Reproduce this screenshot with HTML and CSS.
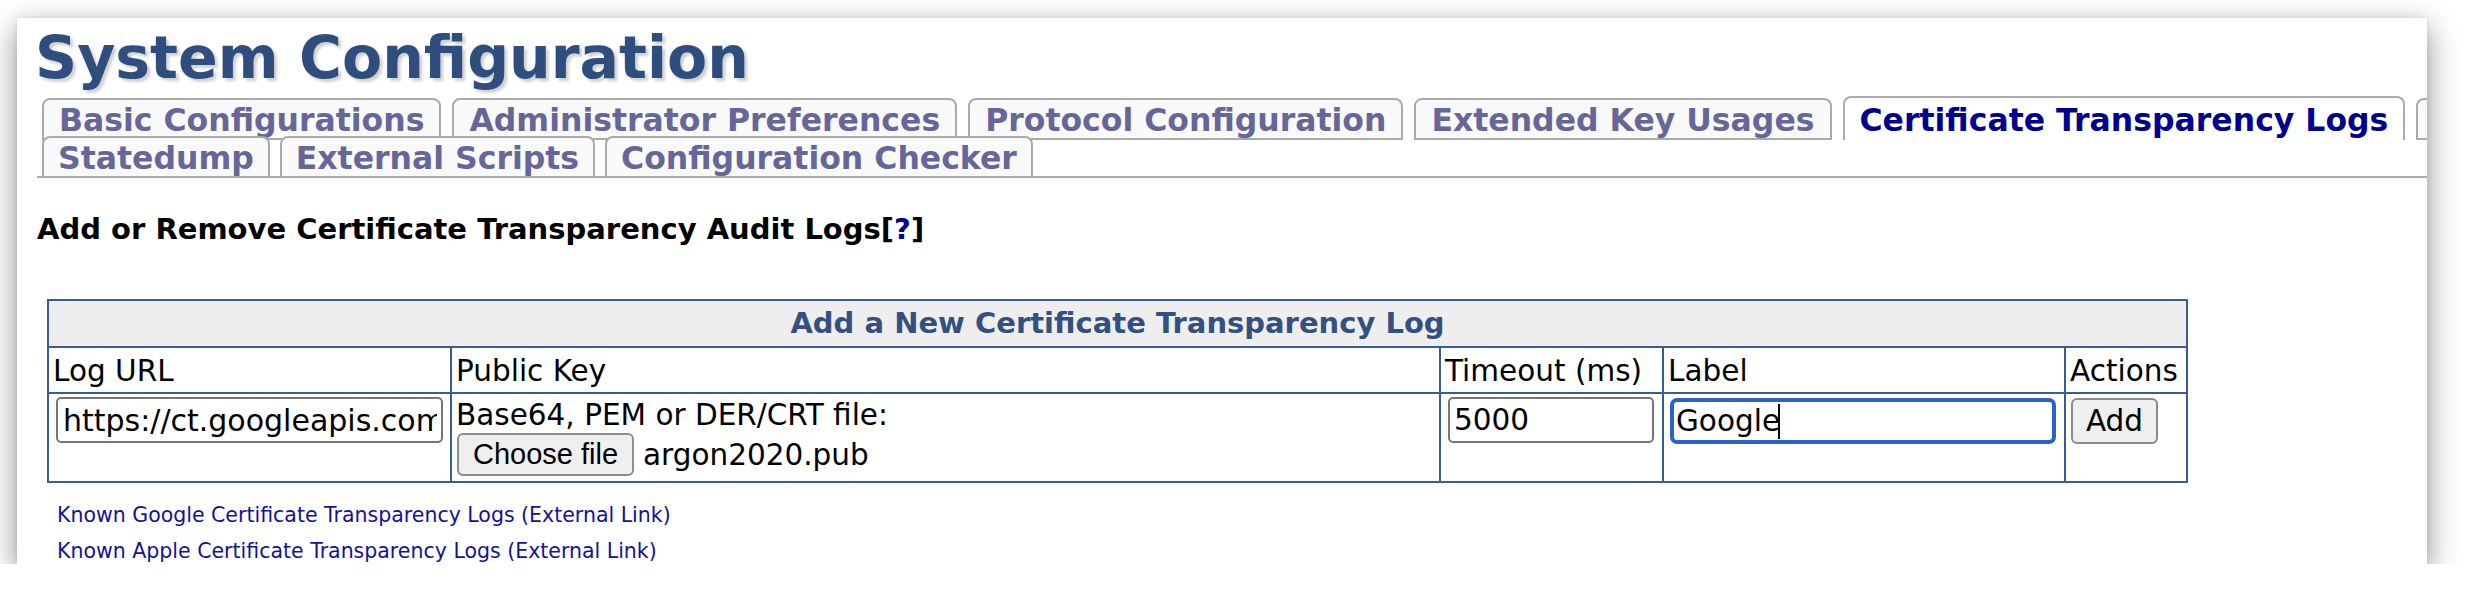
FILE: index.html
```html
<!DOCTYPE html>
<html lang="en">
<head>
<meta charset="utf-8">
<title>System Configuration</title>
<link rel="stylesheet" href="styles.css">
</head>
<body>
<div class="window">
  <h1 class="title">System Configuration</h1>
  <nav class="tabs">
    <div class="tab-row tab-row-1">
      <a class="tab" href="#">Basic Configurations</a>
      <a class="tab" href="#">Administrator Preferences</a>
      <a class="tab" href="#">Protocol Configuration</a>
      <a class="tab" href="#">Extended Key Usages</a>
      <a class="tab tab-active" href="#">Certificate Transparency Logs</a>
      <span class="tab tab-clipped" aria-hidden="true"></span>
    </div>
    <div class="tab-row tab-row-2">
      <a class="tab" href="#">Statedump</a>
      <a class="tab" href="#">External Scripts</a>
      <a class="tab" href="#">Configuration Checker</a>
    </div>
  </nav>

  <h3 class="section-title">Add or Remove Certificate Transparency Audit Logs[<a class="help" href="#">?</a>]</h3>

  <table class="ct-table">
    <colgroup>
      <col class="col-url">
      <col class="col-key">
      <col class="col-timeout">
      <col class="col-label">
      <col class="col-actions">
    </colgroup>
    <thead>
      <tr>
        <th class="caption-cell" colspan="5">Add a New Certificate Transparency Log</th>
      </tr>
      <tr class="head-row">
        <th>Log URL</th>
        <th>Public Key</th>
        <th>Timeout (ms)</th>
        <th>Label</th>
        <th>Actions</th>
      </tr>
    </thead>
    <tbody>
      <tr class="data-row">
        <td><input class="text-input url-input" type="text" value="https://ct.googleapis.com/logs/argon2020/"></td>
        <td>
          <div class="key-hint">Base64, PEM or DER/CRT file:</div>
          <div class="file-row">
            <button class="file-button" type="button">Choose file</button>
            <span class="file-name">argon2020.pub</span>
          </div>
        </td>
        <td><input class="text-input timeout-input" type="text" value="5000"></td>
        <td><div class="text-input label-input">Google<span class="caret"></span></div></td>
        <td><button class="add-button" type="button">Add</button></td>
      </tr>
    </tbody>
  </table>

  <div class="ext-links">
    <a class="ext-link" href="#">Known Google Certificate Transparency Logs (External Link)</a>
    <a class="ext-link" href="#">Known Apple Certificate Transparency Logs (External Link)</a>
  </div>
</div>
</body>
</html>
```

FILE: styles.css
```css
* {
  box-sizing: border-box;
}

body {
  margin: 0;
  background: #ffffff;
  font-family: "DejaVu Sans", Verdana, sans-serif;
  color: #000000;
}

.window {
  margin: 18px 0 0 17px;
  width: 2410px;
  height: 546px;
  padding: 6px 0 0 20px;
  background: #ffffff;
  overflow: hidden;
  box-shadow: 0 10px 30px rgba(0, 0, 0, 0.45), 0 0 6px rgba(0, 0, 0, 0.08);
}

.title {
  margin: 0 0 0 -2px;
  font-size: 58.5px;
  line-height: 68px;
  font-weight: bold;
  color: #2f4e7e;
  text-shadow: 3px 3px 3px #d0d0d0;
  white-space: nowrap;
}

.tabs {
  margin-top: 4px;
}

.tab-row {
  display: flex;
  gap: 11px;
  padding-left: 5px;
  white-space: nowrap;
}

.tab-row-1 {
  align-items: flex-end;
  height: 44px;
}

.tab-row-2 {
  gap: 10px;
  margin-top: -4px;
  border-bottom: 2px solid #aaaaaa;
}

.tab {
  flex: none;
  display: block;
  font-size: 31.5px;
  line-height: 35px;
  font-weight: bold;
  color: #666699;
  background: #f9f9f9;
  border: 2px solid #aaaaaa;
  border-radius: 8px 8px 0 0;
  padding: 3px 15px 0;
  text-decoration: none;
}

.tab-row-2 .tab {
  border-bottom: none;
  padding: 3px 14px 0;
}

.tab-active {
  color: #00008f;
  background: #ffffff;
  border-bottom: none;
  padding-top: 5px;
  padding-bottom: 2px;
}

.tab-clipped {
  width: 200px;
  height: 42px;
}

.section-title {
  margin: 34px 0 0;
  font-size: 29px;
  line-height: 34px;
  font-weight: bold;
  white-space: nowrap;
}

.help {
  color: #000099;
  text-decoration: none;
}

.ct-table {
  margin: 53px 0 0 10px;
  width: 2141px;
  table-layout: fixed;
  border-collapse: separate;
  border-spacing: 0;
  border-top: 2px solid #3b5b95;
  border-left: 2px solid #3b5b95;
}

.col-url { width: 403px; }
.col-key { width: 989px; }
.col-timeout { width: 223px; }
.col-label { width: 402px; }
.col-actions { width: 122px; }

.ct-table th,
.ct-table td {
  border-right: 2px solid #3b5b95;
  border-bottom: 2px solid #3b5b95;
  font-size: 29.5px;
  line-height: 34px;
  font-weight: normal;
  text-align: left;
  vertical-align: top;
  white-space: nowrap;
}

.ct-table .caption-cell {
  padding: 5px 4px 6px;
  background: #eeeeee;
  color: #335080;
  font-size: 29px;
  font-weight: bold;
  text-align: center;
}

.head-row th {
  padding: 6px 4px 4px;
}

.data-row td {
  padding: 3px 4px 5px;
}

.text-input {
  display: block;
  height: 46px;
  margin: 0 0 0 3px;
  padding: 0 4px;
  border: 2px solid #767676;
  border-radius: 5px;
  background: #ffffff;
  color: #000000;
  font-family: "DejaVu Sans", Verdana, sans-serif;
  font-size: 29.5px;
}

.url-input {
  width: 387px;
  padding-left: 5px;
  font-size: 30px;
}

.timeout-input {
  width: 206px;
}

.label-input {
  width: 386px;
  margin: 1px 0 0 2px;
  padding: 0 2px;
  border: 4px solid #2a63c6;
  border-radius: 7px;
  line-height: 38px;
  display: flex;
  align-items: center;
}

.caret {
  display: inline-block;
  width: 2px;
  height: 35px;
  background: #000000;
  margin-left: -2px;
}

.key-hint {
  height: 36px;
  line-height: 36px;
}

.file-row {
  display: flex;
  align-items: center;
  gap: 9px;
  height: 43px;
}

.file-button {
  width: 177px;
  height: 43px;
  margin: 0 0 0 1px;
  padding: 0;
  border: 2px solid #8d8d8d;
  border-radius: 6px;
  background: #efefef;
  color: #000000;
  font-family: "Liberation Sans", Arial, sans-serif;
  font-size: 29px;
}

.file-name {
  font-size: 29.5px;
}

.add-button {
  display: block;
  width: 87px;
  height: 46px;
  margin: 1px 0 0 1px;
  padding: 0;
  border: 2px solid #8a8a8a;
  border-radius: 6px;
  background: #efefef;
  color: #000000;
  font-family: "DejaVu Sans", Verdana, sans-serif;
  font-size: 29.5px;
}

.ext-links {
  margin: 14px 0 0 20px;
}

.ext-link {
  display: block;
  font-size: 20.5px;
  line-height: 36px;
  color: #12129a;
  text-decoration: none;
  white-space: nowrap;
}
```
